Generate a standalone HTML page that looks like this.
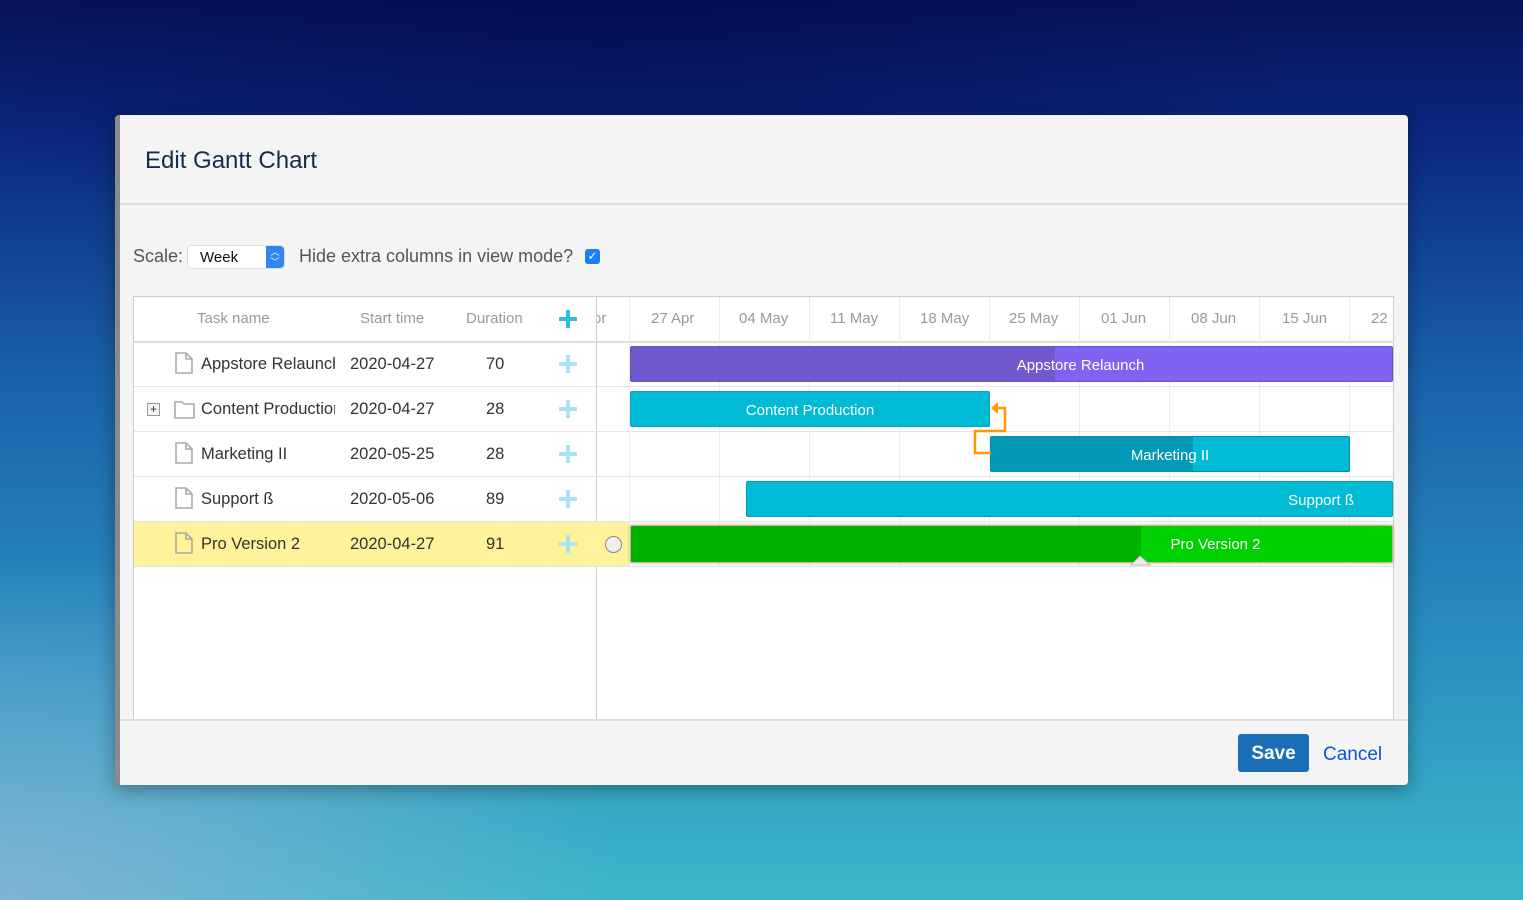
<!DOCTYPE html>
<html><head><meta charset="utf-8"><style>
*{margin:0;padding:0;box-sizing:border-box}
body{width:1523px;height:900px;overflow:hidden;position:relative;font-family:"Liberation Sans",Arial,sans-serif;
background:linear-gradient(180deg,#081258 0%,#0b2a80 16%,#1a62aa 42%,#2a8fc0 72%,#3ab7c8 100%);}
.ov{position:absolute;inset:0;background:radial-gradient(ellipse 900px 500px at 0% 100%,rgba(150,180,215,.75),rgba(150,180,215,0) 70%);}
.ov2{position:absolute;inset:0;background:radial-gradient(ellipse 700px 300px at 40% 0%,rgba(4,10,80,.6),rgba(4,10,80,0));}
.a{position:absolute}
.dlg{left:115px;top:115px;width:1293px;height:670px;background:#f4f4f4;border-radius:4px;box-shadow:0 4px 18px rgba(0,0,0,.35);border-left:5px solid #8a8a8a}
.t{font-size:16.5px;color:#333;white-space:nowrap}
.h{font-size:15px;color:#999;white-space:nowrap}
.bar{position:absolute;border-radius:2px;color:#fff;font-size:15px;line-height:36px;text-align:center;white-space:nowrap;overflow:hidden}
.plus{position:absolute;width:18px;height:18px}
.plus:before{content:"";position:absolute;left:7px;top:0;width:4px;height:18px;background:currentColor}
.plus:after{content:"";position:absolute;top:7px;left:0;height:4px;width:18px;background:currentColor}
</style></head><body>
<div class="ov"></div><div class="ov2"></div>
<div class="a dlg"></div>
<div class="a" style="left:145px;top:147px;font-size:24px;color:#172b4d">Edit Gantt Chart</div>
<div class="a" style="left:120px;top:203px;width:1288px;height:2px;background:#ddd"></div>
<div class="a t" style="left:133px;top:246px;font-size:18px;color:#555">Scale:</div>
<div class="a" style="left:188px;top:246px;width:96px;height:22px;background:#fff;border-radius:4px;box-shadow:0 0 0 1px #ddd"></div>
<div class="a t" style="left:200px;top:249px;font-size:15px;color:#111">Week</div>
<div class="a" style="left:266px;top:246px;width:18px;height:22px;background:#2f86f0;border-radius:0 4px 4px 0;color:#fff;font-size:9px;text-align:center;line-height:10px;padding-top:1px">︿<br>﹀</div>
<div class="a t" style="left:299px;top:246px;font-size:18px;color:#555">Hide extra columns in view mode?</div>
<div class="a" style="left:585px;top:249px;width:15px;height:15px;background:#1a7ef7;border-radius:3px;color:#fff;font-size:12px;text-align:center;line-height:15px">✓</div>
<div class="a" style="left:133px;top:296px;width:1261px;height:425px;background:#fff;border:1px solid #ccc;border-bottom:none"></div>
<div class="a" style="left:596px;top:296px;width:1px;height:425px;background:#ccc"></div>
<div class="a" style="left:133px;top:341px;width:1261px;height:2px;background:#ddd"></div>
<div class="a" style="left:134px;top:521px;width:463px;height:45px;background:#fff29a"></div>
<div class="a" style="left:597px;top:521px;width:33px;height:45px;background:#fff29a"></div>
<div class="a" style="left:134px;top:386px;width:1259px;height:1px;background:#e6e6e6"></div>
<div class="a" style="left:134px;top:431px;width:1259px;height:1px;background:#e6e6e6"></div>
<div class="a" style="left:134px;top:476px;width:1259px;height:1px;background:#e6e6e6"></div>
<div class="a" style="left:134px;top:521px;width:1259px;height:1px;background:#e6e6e6"></div>
<div class="a" style="left:134px;top:566px;width:1259px;height:1px;background:#e6e6e6"></div>
<div class="a" style="left:629px;top:297px;width:1px;height:269px;background:#ececec"></div>
<div class="a" style="left:719px;top:297px;width:1px;height:269px;background:#ececec"></div>
<div class="a" style="left:809px;top:297px;width:1px;height:269px;background:#ececec"></div>
<div class="a" style="left:899px;top:297px;width:1px;height:269px;background:#ececec"></div>
<div class="a" style="left:989px;top:297px;width:1px;height:269px;background:#ececec"></div>
<div class="a" style="left:1079px;top:297px;width:1px;height:269px;background:#ececec"></div>
<div class="a" style="left:1169px;top:297px;width:1px;height:269px;background:#ececec"></div>
<div class="a" style="left:1259px;top:297px;width:1px;height:269px;background:#ececec"></div>
<div class="a" style="left:1349px;top:297px;width:1px;height:269px;background:#ececec"></div>
<div class="a h" style="left:197px;top:310px">Task name</div>
<div class="a h" style="left:360px;top:310px">Start time</div>
<div class="a h" style="left:466px;top:310px">Duration</div>
<div class="plus" style="left:559px;top:310px;color:#29bfe0"></div>
<div class="a h" style="left:597px;top:310px;width:32px;overflow:hidden"><span style="margin-left:-4px">or</span></div>
<div class="a h" style="left:651px;top:310px">27 Apr</div>
<div class="a h" style="left:739px;top:310px">04 May</div>
<div class="a h" style="left:830px;top:310px">11 May</div>
<div class="a h" style="left:920px;top:310px">18 May</div>
<div class="a h" style="left:1009px;top:310px">25 May</div>
<div class="a h" style="left:1101px;top:310px">01 Jun</div>
<div class="a h" style="left:1191px;top:310px">08 Jun</div>
<div class="a h" style="left:1282px;top:310px">15 Jun</div>
<div class="a h" style="left:1371px;top:310px">22</div>
<svg class="a" style="left:170px;top:350px" width="30" height="210" fill="#fff" stroke="#aaa" stroke-width="1.6">
<path d="M6 3h10l6 6v14H6z M16 3v6h6"/>
<path d="M5 52h7l2 2h10v14H5z"/>
<path d="M6 93h10l6 6v14H6z M16 93v6h6"/>
<path d="M6 138h10l6 6v14H6z M16 138v6h6"/>
<path d="M6 183h10l6 6v14H6z M16 183v6h6" fill="#fff29a"/>
</svg>
<div class="a" style="left:147px;top:403px;width:13px;height:13px;border:1px solid #999;background:#f4f4f4;font-size:12px;line-height:10px;text-align:center;color:#333">+</div>
<div class="a t" style="left:201px;top:355px;width:134px;overflow:hidden">Appstore Relaunch</div>
<div class="a t" style="left:201px;top:400px;width:134px;overflow:hidden">Content Production</div>
<div class="a t" style="left:201px;top:445px">Marketing II</div>
<div class="a t" style="left:201px;top:490px">Support ß</div>
<div class="a t" style="left:201px;top:535px">Pro Version 2</div>
<div class="a t" style="left:350px;top:355px">2020-04-27</div>
<div class="a t" style="left:350px;top:400px">2020-04-27</div>
<div class="a t" style="left:350px;top:445px">2020-05-25</div>
<div class="a t" style="left:350px;top:490px">2020-05-06</div>
<div class="a t" style="left:350px;top:535px">2020-04-27</div>
<div class="a t" style="left:486px;top:355px">70</div>
<div class="a t" style="left:486px;top:400px">28</div>
<div class="a t" style="left:486px;top:445px">28</div>
<div class="a t" style="left:486px;top:490px">89</div>
<div class="a t" style="left:486px;top:535px">91</div>
<div class="plus" style="left:559px;top:355px;color:#a8e4f2"></div>
<div class="plus" style="left:559px;top:400px;color:#a8e4f2"></div>
<div class="plus" style="left:559px;top:445px;color:#a8e4f2"></div>
<div class="plus" style="left:559px;top:490px;color:#a8e4f2"></div>
<div class="plus" style="left:559px;top:535px;color:#a8e4f2"></div>
<div class="bar" style="left:630px;top:346px;width:763px;height:36px;background:linear-gradient(90deg,#7059cc 0,#7059cc 424px,#7f63f3 424px);border:1px solid #6650c0;padding-left:138px;line-height:37px">Appstore Relaunch</div>
<div class="bar" style="left:630px;top:391px;width:360px;height:36px;background:#00bbd6;border:1px solid #02a6c0;line-height:37px">Content Production</div>
<div class="bar" style="left:990px;top:436px;width:360px;height:36px;background:linear-gradient(90deg,#0199b5 0,#0199b5 202px,#00bbd6 202px);border:1px solid #0290aa;line-height:37px">Marketing II</div>
<div class="bar" style="left:746px;top:481px;width:647px;height:36px;background:#00bbd6;border:1px solid #02a0bb;text-align:right;padding-right:38px;line-height:37px">Support ß</div>
<div class="bar" style="left:630px;top:525px;width:763px;height:38px;background:linear-gradient(90deg,#00b100 0,#00b100 510px,#00d100 510px);border:1px solid #c9b98a;box-shadow:0 0 3px rgba(160,140,80,.6);padding-left:408px;text-align:center;line-height:38px">Pro Version 2</div>
<svg class="a" style="left:1130px;top:552px" width="22" height="14"><path d="M1 13L10 4l10 9z" fill="#eee" stroke="#bbb"/></svg>
<div class="a" style="left:605px;top:536px;width:17px;height:17px;border-radius:50%;background:#eee;border:1.5px solid #888"></div>
<svg class="a" style="left:965px;top:398px" width="50" height="80" fill="none" stroke="#ff9a00" stroke-width="2.5">
<path d="M32 10h8v23H10v22h16"/><path d="M26 10l7-6v12z" fill="#ff9a00" stroke="none"/>
</svg>
<div class="a" style="left:120px;top:719px;width:1288px;height:2px;background:#ddd"></div>
<div class="a" style="left:1238px;top:734px;width:71px;height:38px;background:#1a6fb8;border-radius:3px;color:#fff;font-weight:bold;font-size:19px;text-align:center;line-height:39px">Save</div>
<div class="a" style="left:1323px;top:744px;font-size:19px;color:#0a56d0">Cancel</div>
</body></html>
